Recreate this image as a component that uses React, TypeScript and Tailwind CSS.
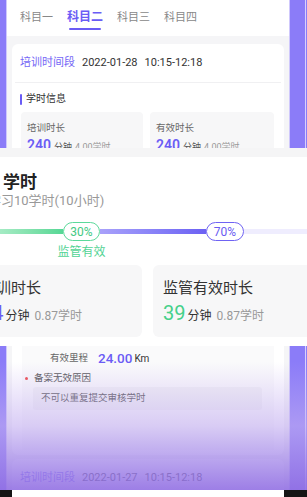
import type { FC } from 'react';

const tabs = ['科目一', '科目二', '科目三', '科目四'];

const SideStrip: FC<{ side: 'left' | 'right' }> = ({ side }) =>
  side === 'left' ? (
    <div className="flex h-full w-[7px] shrink-0">
      <div className="w-[6px] bg-[#8b7cf8]" />
      <div className="w-px bg-[#cfc8fc]" />
    </div>
  ) : (
    <div className="flex h-full w-[18px] shrink-0">
      <div className="w-px bg-[#cfc8fc]" />
      <div className="w-[15px] bg-[#8b7cf8]" />
      <div className="w-px bg-[#d7d1fd]" />
      <div className="w-px bg-[#8b7cf8]" />
    </div>
  );

const DateHeader: FC<{ date: string }> = ({ date }) => (
  <div className="flex h-[38px] items-center gap-[7px] px-[8px] text-[11px]">
    <span className="text-[#7567f6]">培训时间段</span>
    <span className="text-[#333]">{date}</span>
    <span className="text-[#333]">10:15-12:18</span>
  </div>
);

const SmallStat: FC<{ title: string }> = ({ title }) => (
  <div className="h-[60px] rounded-[4px] bg-[#f7f7f8] px-[6px] pt-[9px]">
    <div className="text-[9.5px] leading-[13px] text-[#666]">{title}</div>
    <div className="mt-[2px] flex items-baseline gap-[3px] leading-[18px]">
      <span className="text-[14px] font-semibold text-[#6b5cf5]">240</span>
      <span className="text-[9px] text-[#555]">分钟</span>
      <span className="text-[9px] text-[#999]">4.00学时</span>
    </div>
  </div>
);

const BigStat: FC<{ title: string; value: string; color: string }> = ({
  title,
  value,
  color,
}) => (
  <div className="h-[72px] w-[171px] shrink-0 rounded-[6px] bg-[#f7f7f8] pl-[10px] pt-[13px]">
    <div className="whitespace-nowrap text-[15px] leading-[20px] text-[#333]">
      {title}
    </div>
    <div className="mt-[3px] flex items-baseline whitespace-nowrap leading-[24px]">
      <span className={`text-[20px] ${color}`}>{value}</span>
      <span className="ml-[2px] text-[12px] text-[#333]">分钟</span>
      <span className="ml-[5px] text-[12px] text-[#999]">0.87学时</span>
    </div>
  </div>
);

const App: FC = () => {
  return (
    <div className="relative h-[497px] w-[307px] overflow-hidden bg-white font-['Roboto','Noto_Sans_CJK_SC',sans-serif]">
      <div className="flex h-[490px]">
        <SideStrip side="left" />

        <div className="flex w-[282px] shrink-0 flex-col bg-[#f5f5f7]">
          <div className="flex h-[36px] shrink-0 items-start gap-[14px] bg-white pl-[13px] pt-[9px]">
            {tabs.map((tab, i) =>
              i === 1 ? (
                <div key={tab} className="flex flex-col items-center">
                  <span className="text-[12px] font-semibold leading-[17px] text-[#6a5cf5]">
                    {tab}
                  </span>
                  <span className="mt-[2px] h-[2px] w-[32px] rounded-full bg-[#6a5cf5]" />
                </div>
              ) : (
                <span key={tab} className="text-[11px] leading-[17px] text-[#888]">
                  {tab}
                </span>
              ),
            )}
          </div>

          <div className="flex flex-col gap-[4px] px-[5px] pt-[8px]">
            <div className="rounded-[6px] bg-white pb-[5px]">
              <DateHeader date="2022-01-28" />
              <div className="mx-[3px] h-px bg-[#f0f0f2]" />

              <div className="flex items-center gap-[4px] pl-[8px] pt-[9px] leading-[14px]">
                <span className="h-[11px] w-[2px] rounded-full bg-[#6a5cf5]" />
                <span className="text-[10px] text-[#333]">学时信息</span>
              </div>

              <div className="mt-[6px] grid grid-cols-[122px_124px] gap-[7px] pl-[9px]">
                <SmallStat title="培训时长" />
                <SmallStat title="有效时长" />
              </div>

              <div className="mx-[10px] mt-[10px] bg-[#fafafb] pb-[40px] pt-[165px] text-[9.5px]">
                <div className="flex h-[22px] items-center">
                  <span className="w-[66px] text-right text-[#666]">有效里程</span>
                  <span className="ml-[10px] text-[13.5px] font-medium text-[#6b5cf5]">
                    24.00
                  </span>
                  <span className="ml-[2px] text-[10px] text-[#333]">Km</span>
                </div>
                <div className="flex h-[18px] items-center pl-[3px]">
                  <span className="h-[3px] w-[3px] rounded-full bg-[#f04848]" />
                  <span className="ml-[6px] text-[#555]">备案无效原因</span>
                </div>
                <div className="ml-[11px] flex h-[23px] w-[229px] items-center rounded-[3px] bg-[#f2f2f4] pl-[8px] text-[#555]">
                  不可以重复提交审核学时
                </div>
              </div>
            </div>

            <div className="rounded-[6px] bg-white pb-[20px]">
              <DateHeader date="2022-01-27" />
            </div>
          </div>
        </div>

        <SideStrip side="right" />
      </div>

      <div className="h-[7px] bg-[#151515]" />

      {/* fade over the lower part of the page */}
      <div className="absolute left-0 right-0 top-[362px] h-[128px] bg-linear-to-b from-white/0 via-[#c2adf0]/60 to-[#9270e3]/90" />

      {/* popup sheet */}
      <div className="absolute left-[-29px] top-[148px] h-[198px] w-[370px] bg-white">
        <div className="h-[9px] bg-[#f5f5f6]" />
        <div className="pl-[32px] pt-[15px] text-[17px] font-semibold leading-[20px] text-[#222]">
          学时
        </div>
        <div className="mt-[1px] whitespace-nowrap pl-[4px] text-[13px] leading-[16px] text-[#999]">
          需学习10学时(10小时)
        </div>

        <div className="mt-[13px] flex h-[19px] items-center">
          <div className="h-[5px] w-[92px] rounded-l-full bg-linear-to-r from-[#c3f4da] to-[#55d795]" />
          <div className="flex h-[19px] w-[37px] items-center justify-center rounded-full border-[1.5px] border-[#5cd99b] bg-white text-[12px] text-[#43c983]">
            30%
          </div>
          <div className="h-[5px] w-[106px] bg-linear-to-r from-[#a9a1fa] to-[#6c60f3]" />
          <div className="flex h-[19px] w-[38px] items-center justify-center rounded-full border-[1.5px] border-[#6f63f3] bg-white text-[12px] text-[#6a5cf2]">
            70%
          </div>
          <div className="h-[5px] flex-1 bg-[#efedfe]" />
        </div>
        <div className="ml-[92px] mt-[4px] flex w-[37px] justify-center">
          <span className="whitespace-nowrap text-[12px] leading-[14px] text-[#52d394]">
            监管有效
          </span>
        </div>

        <div className="mt-[6px] flex gap-[11px]">
          <BigStat title="培训时长" value="24" color="text-[#6b5cf5]" />
          <BigStat title="监管有效时长" value="39" color="text-[#45d08a]" />
        </div>
      </div>
    </div>
  );
};

export default App;
